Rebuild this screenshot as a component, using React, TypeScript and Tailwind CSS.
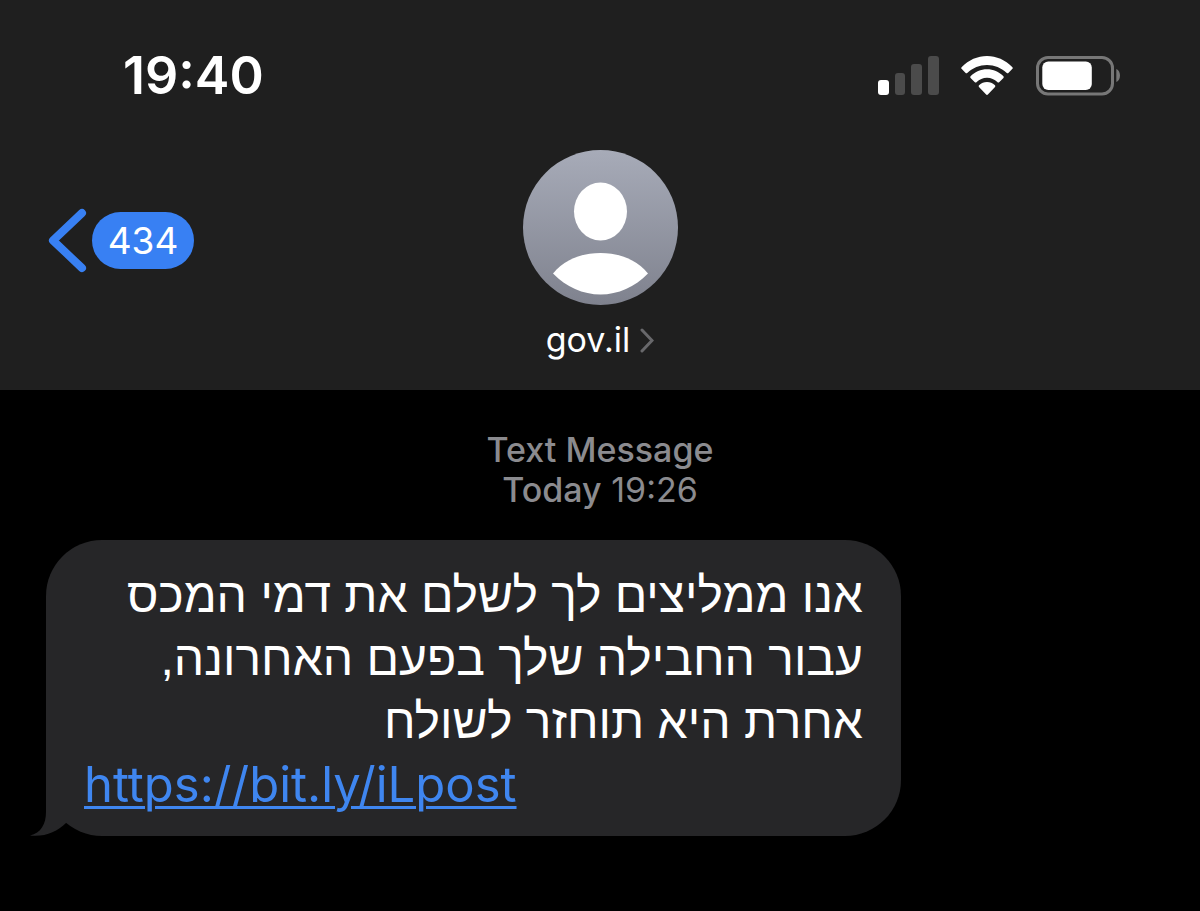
const thread = {
  time: '19:40',
  unread: 434,
  sender: 'gov.il',
  service: 'Text Message',
  day: 'Today',
  sentAt: '19:26',
  lines: [
    'אנו ממליצים לך לשלם את דמי המכס',
    'עבור החבילה שלך בפעם האחרונה,',
    'אחרת היא תוחזר לשולח',
  ],
  link: 'https://bit.ly/iLpost',
}

function SignalIcon() {
  return (
    <svg width="61" height="40" viewBox="0 0 61 40" aria-hidden="true">
      <rect x="0" y="24" width="11" height="15" rx="3" fill="#fff" />
      <rect x="17" y="17" width="10" height="22" rx="3" fill="#4b4b4b" />
      <rect x="33" y="8" width="11" height="31" rx="3" fill="#4b4b4b" />
      <rect x="50" y="0" width="11" height="39" rx="3" fill="#4b4b4b" />
    </svg>
  )
}

function WifiIcon() {
  return (
    <svg width="52" height="40" viewBox="0 0 52 40" fill="#fff" aria-hidden="true">
      <path d="M.8 10.900C7.700 4 16.500 0 26 0s18.300 4 25.200 10.900c.7.700.7 1.500 0 2.200l-3.600 3.600c-.7.700-1.400.7-2.100 0C40.200 11.700 33.500 8.900 26 8.900S11.800 11.700 6.500 16.700c-.7.700-1.400.7-2.100 0L.8 13.100c-.7-.7-.7-1.500 0-2.200Z" />
      <path d="M9.800 20C14.100 15.700 19.800 13.200 26 13.200s11.900 2.500 16.200 6.800c.7.700.7 1.500 0 2.200l-3.800 3.800c-.7.700-1.400.7-2.100 0-2.700-2.600-6.200-4.200-10.300-4.200s-7.600 1.600-10.300 4.200c-.7.700-1.400.7-2.100 0l-3.800-3.800c-.7-.7-.7-1.500 0-2.200Z" />
      <path d="M18.300 29C20.300 27.200 23 26.100 26 26.100s5.700 1.100 7.700 2.900c.8.700.8 1.500.1 2.200l-6.700 7.100c-.7.800-1.500.8-2.200 0l-6.700-7.100c-.7-.7-.7-1.500.1-2.200Z" />
    </svg>
  )
}

function BatteryIcon() {
  return (
    <svg width="85" height="40" viewBox="0 0 85 40" aria-hidden="true">
      <rect x="2.500" y="1.500" width="75" height="36.500" rx="10.500" fill="none" stroke="#777" strokeWidth="3" />
      <rect x="7.300" y="5.500" width="49.500" height="28.500" rx="6" fill="#fff" />
      <path d="M81.300 13c2.500 1.200 3.700 3.600 3.700 6.500s-1.200 5.300-3.700 6.500Z" fill="#777" />
    </svg>
  )
}

function Avatar() {
  return (
    <svg width="155" height="155" viewBox="0 0 155 155" aria-hidden="true">
      <defs>
        <linearGradient id="avatar" x1="0" y1="0" x2="0" y2="1">
          <stop offset="0" stopColor="#a7abb8" />
          <stop offset="1" stopColor="#7f828e" />
        </linearGradient>
      </defs>
      <circle cx="77.500" cy="77.500" r="77.500" fill="url(#avatar)" />
      <ellipse cx="77.500" cy="61.500" rx="26.500" ry="29" fill="#fff" />
      <path d="M30 123.500C42 109 59 103 77.500 103s35.500 6 47.500 20.500C112 137 95 144.500 77.500 144.500S43 137 30 123.500Z" fill="#fff" />
    </svg>
  )
}

function StatusBar() {
  return (
    <div className="flex h-16 items-center justify-between pr-20 pl-[123px]">
      <time className="text-[52px] leading-[64px] font-semibold">{thread.time}</time>
      <div className="flex items-center gap-[22px]">
        <SignalIcon />
        <WifiIcon />
        <BatteryIcon />
      </div>
    </div>
  )
}

function ThreadHeader() {
  return (
    <header className="bg-[#1f1f1f] pt-11 pb-7">
      <StatusBar />

      <div className="grid grid-cols-3 pt-[42px]">
        <div className="pt-[58px] pl-12">
          <button type="button" aria-label="Back" className="flex items-center gap-[5px]">
            <svg width="39" height="65" viewBox="0 0 39 65" fill="none" aria-hidden="true">
              <path
                d="M34 5 5 32.500 34 60"
                stroke="#3880f3"
                strokeWidth="8"
                strokeLinecap="round"
                strokeLinejoin="round"
              />
            </svg>
            <span className="flex h-[57px] w-[102px] items-center justify-center rounded-full bg-[#3880f3] text-[37px]">
              {thread.unread}
            </span>
          </button>
        </div>

        <div className="flex flex-col items-center">
          <Avatar />
          <button type="button" className="mt-[13px] flex items-center gap-2.5 text-[34px] leading-[44px]">
            {thread.sender}
            <svg width="14" height="25" viewBox="0 0 14 25" fill="none" aria-hidden="true">
              <path d="m2 2 10 10.500L2 23" stroke="#68686b" strokeWidth="3" strokeLinecap="round" />
            </svg>
          </button>
        </div>
      </div>
    </header>
  )
}

function Bubble() {
  return (
    <article className="relative mt-[30px] mr-6 ml-[46px] max-w-[855px] rounded-[56px] bg-[#262628] px-[38px] pt-6 pb-5">
      <svg
        className="absolute bottom-0 -left-4"
        width="60"
        height="57"
        viewBox="0 0 60 57"
        fill="#262628"
        aria-hidden="true"
      >
        <path d="M16 0V33C16 45 11 54 0 56.500C15 58 27 53 36 44L60 20V0Z" />
      </svg>
      <p dir="rtl" lang="he" className="relative font-['Liberation_Sans',Arial,sans-serif] text-[48px] leading-[63px]">
        {thread.lines.map((line) => (
          <span key={line} className="block whitespace-nowrap">
            {line}
          </span>
        ))}
      </p>
      <a
        href={thread.link}
        className="relative block text-[49px] leading-[63px] text-[#3f86f0] underline decoration-[3px] underline-offset-4"
      >
        {thread.link}
      </a>
    </article>
  )
}

export default function App() {
  return (
    <div className="min-h-screen bg-black font-['Inter','Liberation_Sans',sans-serif] text-white">
      <ThreadHeader />
      <main className="pt-10 pb-16">
        <p className="text-center text-[34px] leading-10 text-[#8b8b8f]">
          <span className="block font-medium">{thread.service}</span>
          <span className="font-medium">{thread.day}</span> {thread.sentAt}
        </p>
        <Bubble />
      </main>
    </div>
  )
}
